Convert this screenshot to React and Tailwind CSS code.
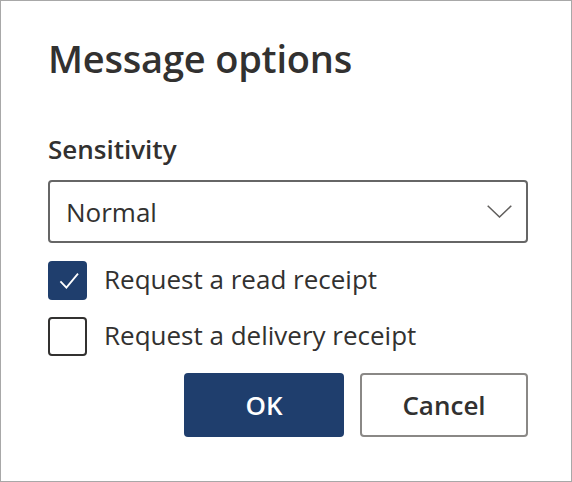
import React from "react";

export default function App() {
  const font = { fontFamily: '"Open Sans", "Noto Sans", sans-serif' };
  return (
    <div
      className="w-[572px] h-[482px] bg-white border border-[#a8a8a8] pl-[47px] pr-[43px] pt-[35px] text-[#323130] flex flex-col"
      style={font}
    >
      <h1 className="text-[38px] leading-[44px] h-[44px] font-semibold tracking-[-0.2px] whitespace-nowrap">
        Message options
      </h1>
      <div className="mt-[54px] text-[26px] leading-[30px] h-[30px] font-semibold">
        Sensitivity
      </div>
      <div className="mt-[16px] h-[63px] border-2 border-[#666666] rounded-[4px] flex items-center justify-between pl-[16px] pr-[14px]">
        <span className="text-[26px] leading-[32px]">Normal</span>
        <svg width="25" height="13" viewBox="0 0 25 13" fill="none">
          <polyline
            points="0.7,0.7 12.5,12 24.3,0.7"
            stroke="#605e5c"
            strokeWidth="1.5"
            strokeLinejoin="miter"
          />
        </svg>
      </div>
      <div className="mt-[18px] flex items-center gap-[17px] h-[39px]">
        <div className="w-[39px] h-[39px] shrink-0 rounded-[4px] bg-[#1f3e6d] flex items-center justify-center">
          <svg width="39" height="39" viewBox="0 0 39 39" fill="none">
            <polyline
              points="12.4,20.3 18.4,26.6 30,12.6"
              stroke="#ffffff"
              strokeWidth="1.8"
            />
          </svg>
        </div>
        <span className="text-[26px] leading-[32px] pb-[3px] whitespace-nowrap">Request a read receipt</span>
      </div>
      <div className="mt-[17px] flex items-center gap-[17px] h-[39px]">
        <div className="w-[39px] h-[39px] shrink-0 rounded-[4px] border-2 border-[#323130] bg-white" />
        <span className="text-[26px] leading-[32px] pb-[3px] whitespace-nowrap">Request a delivery receipt</span>
      </div>
      <div className="mt-[17px] flex justify-end gap-[16px]">
        <button className="w-[160px] h-[64px] rounded-[4px] bg-[#1f3e6d] text-white text-[26px] font-semibold">
          OK
        </button>
        <button className="w-[168px] h-[64px] rounded-[4px] border-2 border-[#8a8886] bg-white text-[#323130] text-[26px] font-semibold">
          Cancel
        </button>
      </div>
    </div>
  );
}
